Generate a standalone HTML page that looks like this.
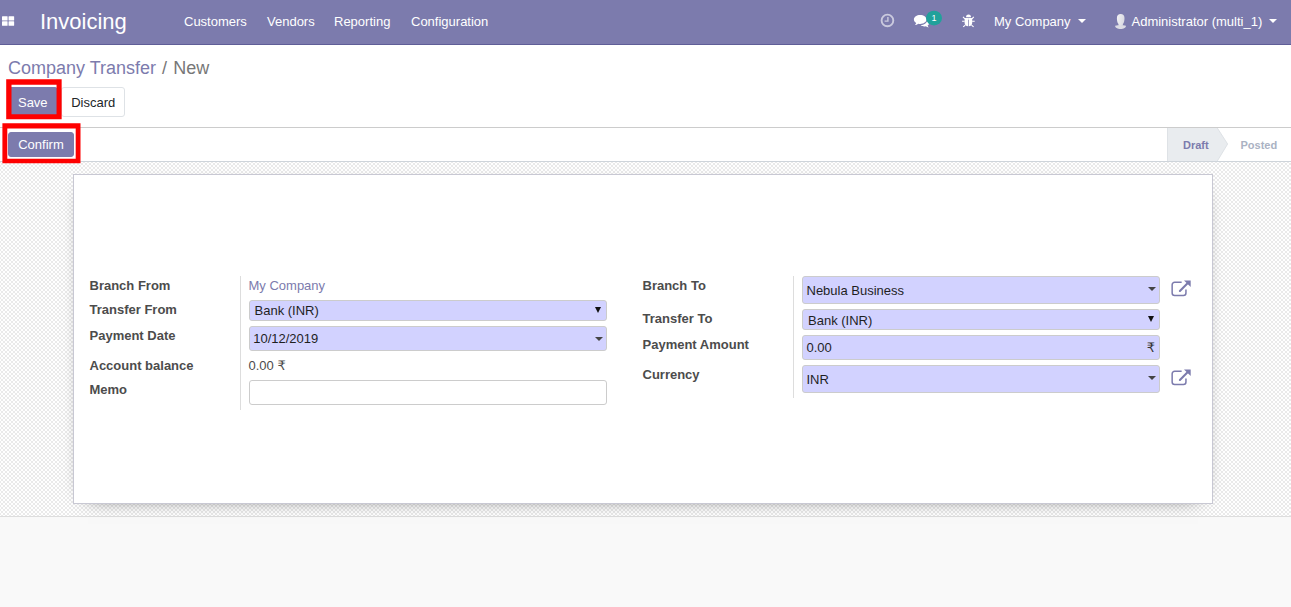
<!DOCTYPE html>
<html lang="en">
<head>
<meta charset="utf-8">
<title>Odoo - Company Transfer</title>
<style>
*{box-sizing:border-box;}
html,body{margin:0;padding:0;}
body{width:1291px;height:607px;overflow:hidden;position:relative;background:#f9f9f9;font-family:"Liberation Sans",Arial,sans-serif;font-size:13px;color:#4c4c4c;line-height:1.5;}
a{text-decoration:none;color:#7c7bad;}
.abs{position:absolute;}
.t{position:absolute;white-space:nowrap;line-height:20px;height:20px;}

/* navbar */
.navbar{position:absolute;left:0;top:0;width:1291px;height:45px;background:#7c7bad;border-bottom:1px solid #5f5e97;color:#fff;}
.navbar .t{color:#fff;}
.brand{font-size:22px;line-height:30px;height:30px;}
.menu{color:rgba(255,255,255,.9);}

/* control panel */
.cp{position:absolute;left:0;top:45px;width:1291px;height:83px;background:#fff;border-bottom:1px solid #ccc;}
.bc{font-size:18px;line-height:26px;height:26px;}
.btn{position:absolute;border:1px solid transparent;border-radius:3px;text-align:center;white-space:nowrap;font-size:13px;}
.btn-primary{background:#7c7bad;border-color:#7c7bad;color:#fff;}
.btn-secondary{background:#fff;border-color:#dee2e6;color:#212529;}

/* statusbar */
.sb{position:absolute;left:0;top:128px;width:1291px;height:34px;background:#fff;border-bottom:1px solid #ced4da;}

/* sheet */
.sheetbg{position:absolute;left:0;top:162px;width:1291px;height:355px;border-bottom:1px solid #ddd;background-color:#fff;
 background-image:conic-gradient(#eaeaea 25%,#fff 0 50%,#eaeaea 0 75%,#fff 0);background-size:4px 4px;background-position:3px 1px;}
.sheet{position:absolute;left:73px;top:12px;width:1140px;height:330px;background:#fff;border:1px solid #c8c8d3;box-shadow:0 5px 20px -15px #000;}

.lbl{font-weight:bold;color:#4c4c4c;}
.sep{position:absolute;width:1px;background:#ddd;}
.fld{position:absolute;border:1px solid #ccc;border-radius:3px;background:#fff;}
.req{background:#d2d2ff;}
.fld .t{color:#1f1f1f;}
.red{position:absolute;border:5px solid #fe0000;}
</style>
</head>
<body>

<!-- NAVBAR -->
<div class="navbar">
  <svg class="abs" style="left:2px;top:15.5px" width="13" height="11" viewBox="0 0 13 11"><g fill="#fff"><rect x="0" y="0.15" width="5.6" height="4.25" rx="0.5"/><rect x="6.55" y="0.15" width="5.6" height="4.25" rx="0.5"/><rect x="0" y="5.25" width="5.6" height="4.55" rx="0.5"/><rect x="6.55" y="5.25" width="5.6" height="4.55" rx="0.5"/></g></svg>
  <span class="t brand" style="left:40px;top:7px">Invoicing</span>
  <span class="t menu" style="left:184px;top:12px">Customers</span>
  <span class="t menu" style="left:267px;top:12px">Vendors</span>
  <span class="t menu" style="left:334px;top:12px">Reporting</span>
  <span class="t menu" style="left:411px;top:12px">Configuration</span>

  <!-- clock -->
  <svg class="abs" style="left:880px;top:13px" width="15" height="15" viewBox="0 0 15 15"><g fill="none" stroke="#fff" stroke-opacity=".6"><circle cx="7.45" cy="7.45" r="5.85" stroke-width="1.9"/><path d="M7.9 3.9v4.2H4.6" stroke-width="1.4"/></g></svg>
  <!-- comments -->
  <svg class="abs" style="left:913px;top:14px" width="17" height="14" viewBox="0 0 17 14"><g fill="#fff"><path d="M7.2 1.1C3.7 1.1 0.9 3.1 0.9 5.5c0 1.4 0.9 2.6 2.3 3.5c-0.2 0.8-0.7 1.5-1.3 2.1c1.3-0.1 2.5-0.6 3.4-1.4c0.6 0.1 1.2 0.2 1.9 0.2c3.5 0 6.3-2 6.3-4.4S10.7 1.1 7.2 1.1z"/><path d="M14.3 6.6c-0.5 2.5-3.2 4.4-6.6 4.6c0.9 0.8 2.3 1.2 3.6 1.2c0.5 0 1-0.1 1.5-0.2c0.8 0.7 1.8 1.1 2.9 1.2c-0.5-0.5-0.9-1.1-1.1-1.8c1.1-0.7 1.8-1.7 1.8-2.8c0-0.9-0.5-1.7-1.3-2.3z"/></g></svg>
  <svg class="abs" style="left:925px;top:9px" width="18" height="18" viewBox="0 0 18 18"><ellipse cx="9" cy="9.05" rx="8" ry="7.35" fill="#21a19b"/></svg>
  <span class="t" style="left:926px;top:8px;width:16px;text-align:center;font-size:9px;">1</span>
  <!-- bug -->
  <svg class="abs" style="left:961px;top:14px" width="15" height="14" viewBox="0 0 15 14"><g fill="#fff"><path d="M5 3.2a2.5 2.6 0 0 1 5 0z"/><path d="M3.6 4H7.05V12.3C5 12.3 3.6 10.9 3.6 9z"/><path d="M11.2 4H7.75V12.3C9.8 12.3 11.2 10.9 11.2 9z"/><rect x="7" y="4" width="0.8" height="1.8"/></g><g stroke="#fff" stroke-width="1.1" fill="none"><path d="M1.1 7.3h2.6M11.1 7.3h2.6M2 2.9l1.9 2M12.8 2.9l-1.9 2M2.2 12.9l2.1-1.8M12.600000000000001 12.9l-2.1-1.8"/></g></svg>

  <span class="t menu" style="left:994px;top:12px">My Company</span>
  <div class="abs" style="left:1078.2px;top:19px;width:0;height:0;border-left:4px solid transparent;border-right:4px solid transparent;border-top:4.2px solid #fff;"></div>
  <!-- avatar -->
  <svg class="abs" style="left:1114px;top:13px" width="14" height="17" viewBox="0 0 14 17"><defs><linearGradient id="av" x1="0" y1="0" x2="1" y2="0.3"><stop offset="0" stop-color="#f3f3f5"/><stop offset="1" stop-color="#dadae2"/></linearGradient></defs><path d="M1.1 12.7C3 12.3 4.6 12.1 6.55 12.1S10.1 12.3 12 12.7C12 14.6 9.6 16 6.55 16S1.1 14.6 1.1 12.7z" fill="#dcdce4"/><path d="M6.7 0.9C9 0.9 10.5 2.4 10.5 5C10.5 7.6 10.1 9.700000000000001 8.9 11V12.5H4.5V11C3.3 9.700000000000001 2.9 7.6 2.9 5C2.9 2.4 4.4 0.9 6.7 0.9z" fill="url(#av)"/></svg>
  <span class="t menu" style="left:1131.5px;top:12px">Administrator (multi_1)</span>
  <div class="abs" style="left:1269.2px;top:19px;width:0;height:0;border-left:4px solid transparent;border-right:4px solid transparent;border-top:4.2px solid #fff;"></div>
</div>

<!-- CONTROL PANEL -->
<div class="cp">
  <span class="t bc" style="left:8px;top:10px"><a href="#">Company Transfer</a><span style="color:#777;margin-left:5.9px">/</span><span style="color:#777;margin-left:6.4px">New</span></span>
  <div class="btn btn-primary" style="left:8px;top:42px;width:49.6px;height:30px;line-height:30px;">Save</div>
  <div class="btn btn-secondary" style="left:61.2px;top:42px;width:64px;height:30px;line-height:30px;">Discard</div>
</div>

<!-- STATUSBAR -->
<div class="sb">
  <div class="btn btn-primary" style="left:8px;top:4px;width:66px;height:25px;line-height:23px;">Confirm</div>
  <svg class="abs" style="left:1167px;top:0" width="63" height="33" viewBox="0 0 63 33"><path d="M0 0H50.3L60.6 16L50.3 33H0z" fill="#e9ecef"/><path d="M50.3 0L60.6 16L50.3 33" fill="none" stroke="#dee2e6" stroke-width="1"/><rect x="0" y="0" width="1" height="33" fill="#dee2e6"/></svg>
  <span class="t" style="left:1183px;top:7px;font-size:11px;font-weight:bold;color:#7c7bad;">Draft</span>
  <span class="t" style="left:1240.5px;top:7px;font-size:11px;font-weight:bold;color:#aab2c3;">Posted</span>
</div>

<!-- SHEET -->
<div class="sheetbg">
  <div class="sheet">
    <!-- left column -->
    <span class="t lbl" style="left:15.5px;top:101px">Branch From</span>
    <span class="t lbl" style="left:15.5px;top:125px">Transfer From</span>
    <span class="t lbl" style="left:15.5px;top:151px">Payment Date</span>
    <span class="t lbl" style="left:15.5px;top:181px">Account balance</span>
    <span class="t lbl" style="left:15.5px;top:205px">Memo</span>
    <div class="sep" style="left:166px;top:101px;height:134px"></div>

    <a class="t" href="#" style="left:174.5px;top:101px">My Company</a>
    <div class="fld req" style="left:175px;top:125px;width:358px;height:21px"><span class="t" style="left:4.5px;top:0px;line-height:19px;height:19px">Bank (INR)</span><i class="abs" style="right:4.6px;top:5.9px;border-left:3.4px solid transparent;border-right:3.4px solid transparent;border-top:6px solid #111"></i></div>
    <div class="fld req" style="left:175px;top:151px;width:358px;height:25px"><span class="t" style="left:3.2px;top:2px">10/12/2019</span><i class="abs" style="right:3px;top:10px;border-left:4px solid transparent;border-right:4px solid transparent;border-top:4.2px solid #444"></i></div>
    <span class="t" style="left:174.5px;top:181px">0.00 <span style="font-family:'DejaVu Sans',sans-serif">₹</span></span>
    <div class="fld" style="left:175px;top:205px;width:358px;height:25px"></div>

    <!-- right column -->
    <span class="t lbl" style="left:568.5px;top:101px">Branch To</span>
    <span class="t lbl" style="left:568.5px;top:134px">Transfer To</span>
    <span class="t lbl" style="left:568.5px;top:160px">Payment Amount</span>
    <span class="t lbl" style="left:568.5px;top:190px">Currency</span>
    <div class="sep" style="left:719px;top:101px;height:122px"></div>

    <div class="fld req" style="left:728px;top:101px;width:358px;height:28px"><span class="t" style="left:3.5px;top:4px">Nebula Business</span><i class="abs" style="right:3px;top:10px;border-left:4px solid transparent;border-right:4px solid transparent;border-top:4.2px solid #444"></i></div>
    <div class="fld req" style="left:728px;top:134px;width:358px;height:21px"><span class="t" style="left:5px;top:1px;line-height:19px;height:19px">Bank (INR)</span><i class="abs" style="right:4.6px;top:5.9px;border-left:3.4px solid transparent;border-right:3.4px solid transparent;border-top:6px solid #111"></i></div>
    <div class="fld req" style="left:728px;top:160px;width:358px;height:25px"><span class="t" style="left:3.5px;top:2px">0.00</span><span class="t" style="right:4px;top:2px;color:#333;font-family:'DejaVu Sans',sans-serif">₹</span></div>
    <div class="fld req" style="left:728px;top:190px;width:358px;height:28px"><span class="t" style="left:3.5px;top:4px">INR</span><i class="abs" style="right:3px;top:10px;border-left:4px solid transparent;border-right:4px solid transparent;border-top:4.2px solid #444"></i></div>

    <!-- external link icons -->
    <svg class="abs" style="left:1097px;top:105px" width="21" height="18" viewBox="0 0 21 18"><g fill="none" stroke="#7c7bad" stroke-width="1.5" stroke-linejoin="round"><path d="M14.95 9.6v3.3a2.5 2.5 0 0 1-2.5 2.5H3.65a2.5 2.5 0 0 1-2.5-2.5V4.7a2.5 2.5 0 0 1 2.5-2.5h7"/><path d="M8.9 10.9L17.3 2.6" stroke-width="2.1" stroke-linecap="round"/></g><path d="M13 0.4H19.7V7.1z" fill="#7c7bad"/></svg>
    <svg class="abs" style="left:1097px;top:194px" width="21" height="18" viewBox="0 0 21 18"><g fill="none" stroke="#7c7bad" stroke-width="1.5" stroke-linejoin="round"><path d="M14.95 9.6v3.3a2.5 2.5 0 0 1-2.5 2.5H3.65a2.5 2.5 0 0 1-2.5-2.5V4.7a2.5 2.5 0 0 1 2.5-2.5h7"/><path d="M8.9 10.9L17.3 2.6" stroke-width="2.1" stroke-linecap="round"/></g><path d="M13 0.4H19.7V7.1z" fill="#7c7bad"/></svg>
  </div>
</div>

<!-- red annotation boxes -->
<svg class="abs" style="left:0;top:70px" width="100" height="100" viewBox="0 70 100 100"><path fill="#fe0000" fill-rule="evenodd" d="M6.2 79.2H61.65V119.3H6.2zM11.5 84.8V114.3H56.55V84.8z"/><path fill="#fe0000" fill-rule="evenodd" d="M2.4 123.2H80.5V163.2H2.4zM7.3 128.4V158.65H75.7V128.4z"/></svg>

</body>
</html>
